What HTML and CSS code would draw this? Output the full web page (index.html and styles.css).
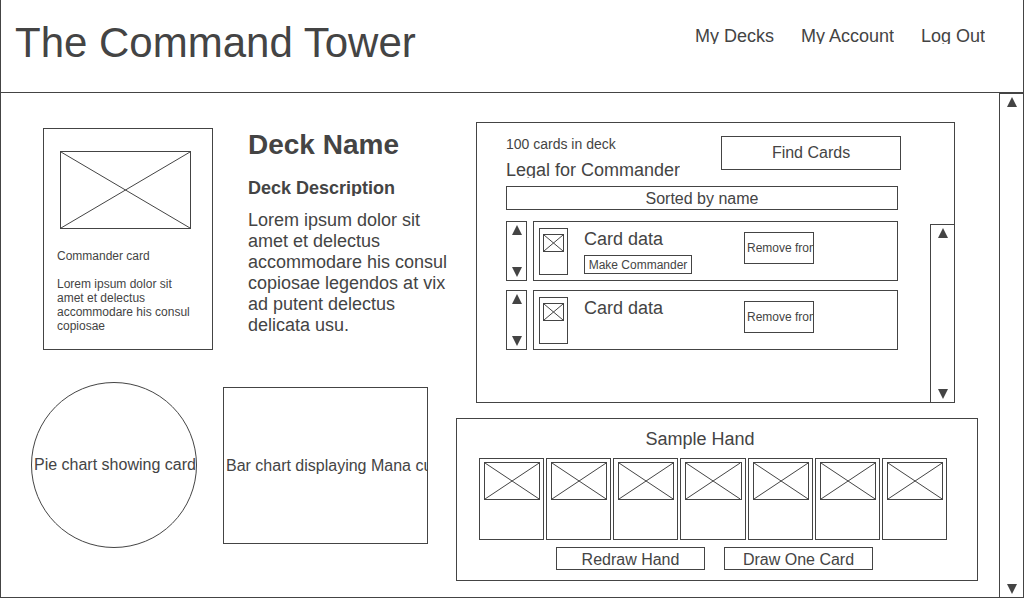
FILE: index.html
```html
<!DOCTYPE html>
<html lang="en">
<head>
<meta charset="utf-8">
<meta name="viewport" content="width=device-width, initial-scale=1">
<title>The Command Tower</title>
<link rel="stylesheet" href="styles.css">
</head>
<body>
<svg class="defs" aria-hidden="true">
  <symbol id="up" viewBox="0 0 10 10"><path d="M5 0 10 10H0Z"/></symbol>
  <symbol id="down" viewBox="0 0 10 10"><path d="M0 0H10L5 10Z"/></symbol>
  <symbol id="cross" viewBox="0 0 100 100" preserveAspectRatio="none"><path d="M0 0 100 100M100 0 0 100" vector-effect="non-scaling-stroke"/></symbol>
</svg>
<div class="frame">
  <header class="header">
    <h1 class="brand">The Command Tower</h1>
    <nav class="nav">
      <a class="nav-link snug" href="#decks">My Decks</a>
      <a class="nav-link snug" href="#account">My Account</a>
      <a class="nav-link snug" href="#logout">Log Out</a>
    </nav>
  </header>
  <div class="body">
    <main class="main">
      <div class="left">
        <section class="intro">
          <article class="commander">
            <svg class="picture commander-picture" aria-hidden="true"><use href="#cross"/></svg>
            <p class="commander-name">Commander card</p>
            <p class="commander-text">Lorem ipsum dolor sit amet et delectus accommodare his consul copiosae</p>
          </article>
          <div class="about">
            <h2 class="deck-name">Deck Name</h2>
            <h3 class="deck-heading snug">Deck Description</h3>
            <p class="deck-text">Lorem ipsum dolor sit amet et delectus accommodare his consul copiosae legendos at vix ad putent delectus delicata usu.</p>
          </div>
        </section>
        <section class="charts">
          <div class="chart pie"><span class="clip">Pie chart showing card</span></div>
          <div class="chart bar"><span class="clip">Bar chart displaying Mana curve</span></div>
        </section>
      </div>
      <div class="right">
        <section class="deck">
          <div class="deck-content">
            <div class="deck-top">
              <div class="status">
                <p class="count">100 cards in deck</p>
                <p class="legal snug">Legal for Commander</p>
              </div>
              <button class="button find" type="button">Find Cards</button>
            </div>
            <div class="list">
              <button class="button sort" type="button">Sorted by name</button>
              <div class="row">
                <div class="scroll boxed">
                  <button class="arrow" type="button" aria-label="Move up"><svg class="tri"><use href="#up"/></svg></button>
                  <button class="arrow" type="button" aria-label="Move down"><svg class="tri"><use href="#down"/></svg></button>
                </div>
                <article class="entry">
                  <div class="thumb"><svg class="picture thumb-picture" aria-hidden="true"><use href="#cross"/></svg></div>
                  <div class="entry-info">
                    <h4 class="entry-name">Card data</h4>
                    <button class="button make" type="button">Make Commander</button>
                  </div>
                  <button class="button remove" type="button"><span class="clip">Remove from</span></button>
                </article>
              </div>
              <div class="row">
                <div class="scroll boxed">
                  <button class="arrow" type="button" aria-label="Move up"><svg class="tri"><use href="#up"/></svg></button>
                  <button class="arrow" type="button" aria-label="Move down"><svg class="tri"><use href="#down"/></svg></button>
                </div>
                <article class="entry">
                  <div class="thumb"><svg class="picture thumb-picture" aria-hidden="true"><use href="#cross"/></svg></div>
                  <div class="entry-info">
                    <h4 class="entry-name">Card data</h4>
                  </div>
                  <button class="button remove" type="button"><span class="clip">Remove from</span></button>
                </article>
              </div>
            </div>
          </div>
          <div class="scroll deck-scroll">
            <button class="arrow" type="button" aria-label="Scroll list up"><svg class="tri"><use href="#up"/></svg></button>
            <button class="arrow" type="button" aria-label="Scroll list down"><svg class="tri"><use href="#down"/></svg></button>
          </div>
        </section>
        <section class="hand">
          <h3 class="hand-title">Sample Hand</h3>
          <div class="hand-cards">
            <div class="hand-card"><svg class="picture hand-picture"><use href="#cross"/></svg></div>
            <div class="hand-card"><svg class="picture hand-picture"><use href="#cross"/></svg></div>
            <div class="hand-card"><svg class="picture hand-picture"><use href="#cross"/></svg></div>
            <div class="hand-card"><svg class="picture hand-picture"><use href="#cross"/></svg></div>
            <div class="hand-card"><svg class="picture hand-picture"><use href="#cross"/></svg></div>
            <div class="hand-card"><svg class="picture hand-picture"><use href="#cross"/></svg></div>
            <div class="hand-card"><svg class="picture hand-picture"><use href="#cross"/></svg></div>
          </div>
          <div class="hand-actions">
            <button class="button action" type="button">Redraw Hand</button>
            <button class="button action" type="button">Draw One Card</button>
          </div>
        </section>
      </div>
    </main>
    <div class="scroll page-scroll">
      <button class="arrow" type="button" aria-label="Scroll page up"><svg class="tri"><use href="#up"/></svg></button>
      <button class="arrow" type="button" aria-label="Scroll page down"><svg class="tri"><use href="#down"/></svg></button>
    </div>
  </div>
</div>
</body>
</html>
```
FILE: styles.css
```css
:root {
  --ink: #444;
  --line: 1px solid var(--ink);
}

* {
  box-sizing: border-box;
}

body {
  margin: 0;
  background: #fff;
  color: var(--ink);
  font: 18px/21px "Liberation Sans", Arial, sans-serif;
}

h1, h2, h3, h4, p {
  margin: 0;
  font-size: inherit;
  font-weight: normal;
}

.defs {
  display: none;
}

.frame {
  border: var(--line);
  border-top: 0;
}

/* Single lines whose box trims the descenders */
.snug {
  height: 17px;
  line-height: 18px;
  overflow: hidden;
}

.clip {
  display: block;
  overflow: hidden;
  padding-left: 2px;
  white-space: nowrap;
}

.button {
  padding: 0;
  border: var(--line);
  border-radius: 0;
  background: none;
  color: inherit;
  font: 16px/18px "Liberation Sans", Arial, sans-serif;
  cursor: pointer;
}

/* Header */
.header {
  display: flex;
  justify-content: space-between;
  align-items: flex-start;
  padding: 19px 38px 25px 14px;
  border-bottom: var(--line);
}

.brand {
  font-size: 42px;
  line-height: 48px;
}

.nav {
  display: flex;
  gap: 27px;
  padding-top: 8px;
}

.nav-link {
  color: inherit;
  text-decoration: none;
}

/* Page body */
.body {
  display: flex;
}

.main {
  flex: 1;
  display: grid;
  grid-template-columns: minmax(0, 455fr) minmax(0, 522fr);
  padding: 29px 21px 16px 0;
}

.left {
  display: flex;
  flex-direction: column;
  gap: 32px;
  padding-top: 6px;
}

.intro {
  display: flex;
  gap: 35px;
  padding-left: 42px;
}

.commander {
  flex: 0 0 170px;
  padding: 22px 16px 16px 13px;
  border: var(--line);
  font-size: 12px;
  line-height: 14px;
}

.picture {
  display: block;
  border: var(--line);
  fill: none;
  stroke: var(--ink);
  stroke-width: 1px;
}

.commander-picture {
  width: 131px;
  height: 78px;
  margin: 0 0 20px 3px;
}

.commander-name {
  margin-bottom: 14px;
}

.about {
  flex: 1;
  min-width: 0;
}

.deck-name {
  padding-top: 1px;
  margin-bottom: 18px;
  font-size: 28px;
  font-weight: bold;
  line-height: 32px;
}

.deck-heading {
  margin-bottom: 14px;
  font-weight: bold;
}

.charts {
  display: flex;
  align-items: center;
  gap: 26px;
  padding-left: 30px;
}

.chart {
  display: grid;
  grid-template-columns: minmax(0, 1fr);
  align-items: center;
  border: var(--line);
  font-size: 16px;
  line-height: 18px;
}

.pie {
  flex: 0 0 166px;
  height: 166px;
  border-radius: 50%;
}

.bar {
  flex: 0 1 205px;
  height: 157px;
  padding-top: 2px;
}

/* Deck panel */
.right {
  display: flex;
  flex-direction: column;
  gap: 15px;
}

.deck {
  display: flex;
  margin: 0 23px 0 20px;
  border: var(--line);
}

.deck-content {
  flex: 1;
  padding: 13px 29px 52px;
}

.deck-top {
  display: flex;
  justify-content: space-between;
  align-items: flex-start;
  margin-bottom: 8px;
}

.count {
  margin-bottom: 9px;
  font-size: 14px;
  line-height: 16px;
}

.find {
  width: 180px;
  height: 34px;
}

.list {
  display: flex;
  flex-direction: column;
  gap: 9px;
  padding-right: 3px;
}

.sort {
  height: 24px;
  margin-bottom: 2px;
  padding-top: 2px;
}

.row {
  display: flex;
  gap: 6px;
}

.entry {
  flex: 1;
  display: flex;
  align-items: flex-start;
  height: 60px;
  padding: 6px 5px;
  border: var(--line);
}

.thumb {
  width: 29px;
  height: 47px;
  padding: 5px 3px;
  border: var(--line);
}

.thumb-picture {
  width: 21px;
  height: 18px;
}

.entry-info {
  flex: 0 0 160px;
  margin-left: 16px;
}

.entry-name {
  padding-top: 1px;
}

.make {
  display: block;
  width: 108px;
  height: 19px;
  margin-top: 5px;
  padding-top: 1px;
  font-size: 12px;
  line-height: 16px;
}

.remove {
  width: 70px;
  height: 32px;
  margin-top: 4px;
  font-size: 12px;
  line-height: 14px;
  text-align: left;
}

/* Scroll columns */
.scroll {
  display: flex;
  flex-direction: column;
  justify-content: space-between;
  align-items: center;
  padding: 3px 0;
  border-left: var(--line);
}

.boxed {
  width: 21px;
  border: var(--line);
}

.deck-scroll {
  width: 24px;
  margin-top: 101px;
  border-top: var(--line);
}

.page-scroll {
  width: 24px;
  border-top: var(--line);
}

.arrow {
  display: block;
  padding: 0;
  border: 0;
  background: none;
  color: inherit;
  cursor: pointer;
}

.tri {
  display: block;
  width: 10px;
  height: 10px;
  fill: var(--ink);
}

/* Sample hand */
.hand {
  padding: 10px 30px 10px 22px;
  border: var(--line);
}

.hand-title {
  margin-bottom: 8px;
  padding-right: 26px;
  text-align: center;
}

.hand-cards {
  display: grid;
  grid-template-columns: repeat(7, 1fr);
  gap: 2px;
}

.hand-card {
  height: 82px;
  padding: 3px 3px 0 4px;
  border: var(--line);
}

.hand-picture {
  width: 100%;
  height: 38px;
}

.hand-actions {
  display: flex;
  justify-content: center;
  gap: 19px;
  margin-top: 7px;
  padding-left: 3px;
}

.action {
  width: 149px;
  height: 23px;
  padding-top: 2px;
}
```
